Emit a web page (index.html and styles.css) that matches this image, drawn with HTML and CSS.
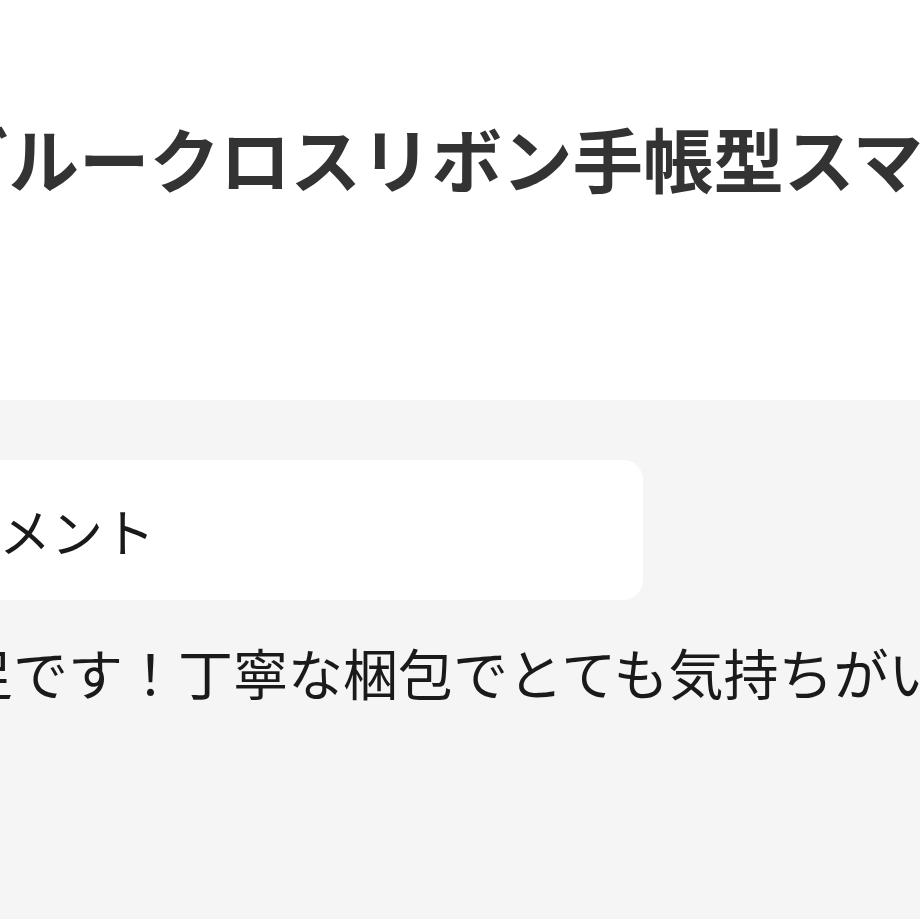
FILE: index.html
```html
<!DOCTYPE html>
<html lang="ja">
<head>
<meta charset="utf-8">
<link rel="stylesheet" href="styles.css">
</head>
<body>
<header class="title-area">
  <h1 class="title">ブルークロスリボン手帳型スマホケース</h1>
</header>
<section class="review-area">
  <div class="review-inner">
    <div class="comment-label">コメント</div>
    <p class="comment">大満足です！丁寧な梱包でとても気持ちがいいです。</p>
  </div>
</section>
</body>
</html>
```
FILE: styles.css
```css
html, body {
  margin: 0;
  padding: 0;
  height: 100%;
  overflow: hidden;
  background: #ffffff;
  font-family: "Noto Sans CJK JP", "Noto Sans", sans-serif;
}
body {
  display: flex;
  flex-direction: column;
}
.title-area {
  height: 400px;
  flex: none;
  overflow: hidden;
}
.title {
  margin: 107px 0 0 -62px;
  font-size: 70.5px;
  line-height: 100px;
  font-weight: 700;
  color: #333333;
  white-space: nowrap;
}
.review-area {
  flex: 1;
  background: #f5f5f5;
  overflow: hidden;
}
.review-inner {
  margin: 60px 0 0 -80px;
  display: flex;
  flex-direction: column;
}
.comment-label {
  width: 723px;
  height: 140px;
  box-sizing: border-box;
  padding-left: 27px;
  background: #ffffff;
  border-radius: 20px;
  display: flex;
  align-items: center;
  font-size: 52px;
  color: #1a1a1a;
  white-space: nowrap;
}
.comment {
  margin: 0 0 0 -72px;
  font-size: 55px;
  line-height: 142px;
  color: #1a1a1a;
  white-space: nowrap;
}
```
